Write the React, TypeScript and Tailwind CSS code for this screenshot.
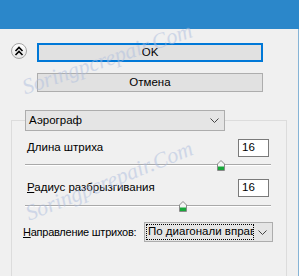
function ChevronDown() {
  return (
    <svg width="9" height="5" viewBox="0 0 9 5" fill="none" stroke="#444" strokeWidth="1">
      <path d="M0.5 0.5l4 4 4-4" />
    </svg>
  )
}

function CollapseIcon() {
  return (
    <svg width="10" height="10" viewBox="0 0 10 10" fill="none" stroke="#000" strokeWidth="1.6">
      <path d="M1.5 5l3.5-3.5 3.5 3.5" />
      <path d="M1.5 9l3.5-3.5 3.5 3.5" />
    </svg>
  )
}

function Slider({ pos }: { pos: number }) {
  return (
    <div className="relative flex h-[12px] w-[246px] items-center">
      <div className="h-[2px] w-full border-t border-[#a9a9a9] bg-white" />
      <svg
        className="absolute top-[1px]"
        style={{ left: pos }}
        width="8"
        height="11"
        viewBox="0 0 8 11"
      >
        <path d="M0.5 4L4 0.5 7.5 4v6.5h-7z" fill="#f4f4f4" stroke="#8a8a8a" />
        <rect x="1" y="6.5" width="6" height="3.5" fill="#18a83a" />
      </svg>
    </div>
  )
}

function NumberBox({ value }: { value: string }) {
  return (
    <div className="flex h-[18px] w-[31px] items-center border border-[#7a7a7a] bg-white pl-[3px] leading-none">
      {value}
    </div>
  )
}

export default function App() {
  return (
    <div className="relative h-[276px] w-[299px] overflow-hidden bg-[#f0f0f0] font-['Liberation_Sans',sans-serif] text-[11.5px] text-black">
      <div className="h-[29px] bg-[#2b87ca]" />
      <div className="h-[247px] border-r border-[#86b4d6]">
        <div className="flex pl-[11px] pt-[14px]">
          <button className="flex h-[16px] w-[16px] items-center justify-center rounded-full border border-[#a5a5a5] bg-gradient-to-b from-white to-[#e6e6e6]">
            <CollapseIcon />
          </button>
          <div className="ml-[10px] flex w-[226px] flex-col gap-[11px]">
            <button className="flex h-[19px] items-center justify-center border-2 border-[#0078d7] bg-[#e1e1e1] leading-none">
              OK
            </button>
            <button className="flex h-[19px] items-center justify-center border border-[#adadad] bg-[#e1e1e1] leading-none">
              Отмена
            </button>
          </div>
        </div>

        <fieldset className="ml-[11px] mt-[18px] h-[200px] w-[275px] border border-b-0 border-[#dcdcdc] px-[13px]">
          <legend className="p-0">
            <div className="flex h-[21px] w-[200px] items-center justify-between border border-[#adadad] bg-[#e5e5e5] pl-[3px] pr-[5px] leading-none">
              <span>Аэрограф</span>
              <ChevronDown />
            </div>
          </legend>

          <div className="mt-[8px] flex w-[244px] items-center justify-between pl-[2px]">
            <span className="leading-none">
              <span className="underline">Д</span>лина штриха
            </span>
            <NumberBox value="16" />
          </div>
          <div className="mt-[2px]">
            <Slider pos={192} />
          </div>

          <div className="mt-[8px] flex w-[244px] items-center justify-between pl-[2px]">
            <span className="leading-none">
              <span className="underline">Р</span>адиус разбрызгивания
            </span>
            <NumberBox value="16" />
          </div>
          <div className="mt-[3px]">
            <Slider pos={154} />
          </div>

          <div className="-ml-[2px] mt-[10px] flex items-center">
            <span className="w-[121px] flex-none whitespace-nowrap text-[11px] leading-none tracking-[-0.25px]">
              <span className="underline">Н</span>аправление штрихов:
            </span>
            <div className="flex h-[20px] w-[129px] flex-none items-center border border-[#adadad] bg-[#e5e5e5] p-[1px]">
              <div className="flex h-full w-[108px] items-center overflow-hidden whitespace-nowrap border border-dotted border-black pl-[1px] leading-none">
                По диагонали вправо
              </div>
              <div className="flex flex-1 justify-center">
                <ChevronDown />
              </div>
            </div>
          </div>
        </fieldset>
      </div>

      <span className="pointer-events-none absolute left-[18px] top-[42px] -rotate-[19deg] font-['Liberation_Serif',serif] text-[22px] italic text-[#aebedf] opacity-50">
        Soringpcrepair.Com
      </span>
      <span className="pointer-events-none absolute left-[20px] top-[164px] -rotate-[22deg] font-['Liberation_Serif',serif] text-[22px] italic text-[#aebedf] opacity-50">
        Soringpcrepair.Com
      </span>
    </div>
  )
}
